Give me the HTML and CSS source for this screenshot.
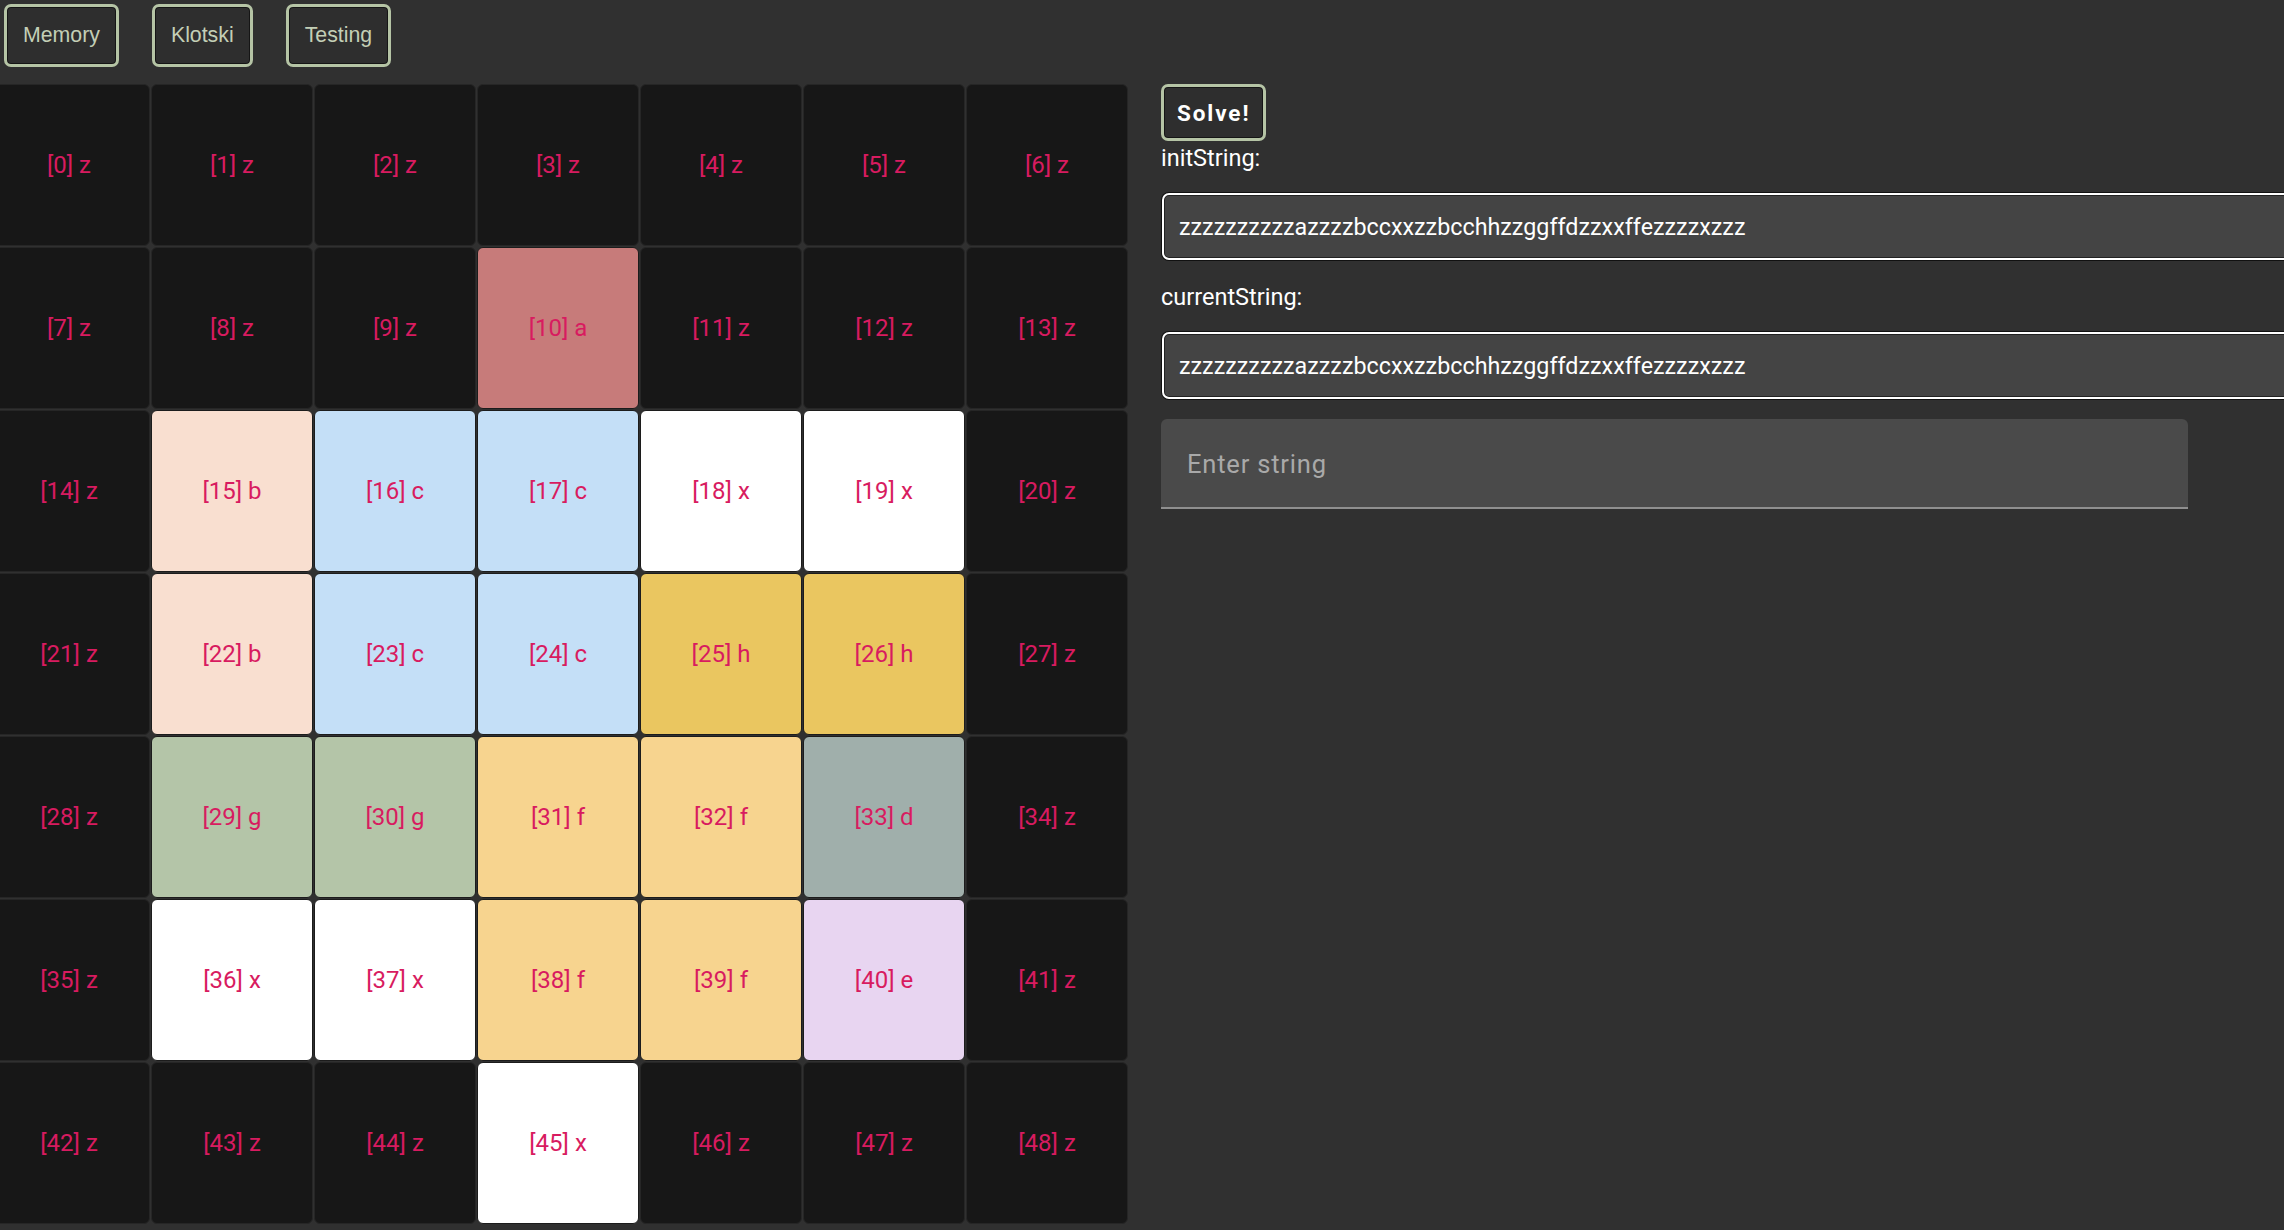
FILE: index.html
```html
<!DOCTYPE html>
<html lang="en">
<head>
<meta charset="utf-8">
<title>Klotski</title>
<link rel="stylesheet" href="styles.css">
</head>
<body>
<nav class="nav">
  <button class="nav-btn">Memory</button>
  <button class="nav-btn">Klotski</button>
  <button class="nav-btn">Testing</button>
</nav>
<main class="main">
  <div class="board">
    <div class="cell z">[0] z</div><div class="cell z">[1] z</div><div class="cell z">[2] z</div><div class="cell z">[3] z</div><div class="cell z">[4] z</div><div class="cell z">[5] z</div><div class="cell z">[6] z</div>
    <div class="cell z">[7] z</div><div class="cell z">[8] z</div><div class="cell z">[9] z</div><div class="cell a">[10] a</div><div class="cell z">[11] z</div><div class="cell z">[12] z</div><div class="cell z">[13] z</div>
    <div class="cell z">[14] z</div><div class="cell b">[15] b</div><div class="cell c">[16] c</div><div class="cell c">[17] c</div><div class="cell x">[18] x</div><div class="cell x">[19] x</div><div class="cell z">[20] z</div>
    <div class="cell z">[21] z</div><div class="cell b">[22] b</div><div class="cell c">[23] c</div><div class="cell c">[24] c</div><div class="cell h">[25] h</div><div class="cell h">[26] h</div><div class="cell z">[27] z</div>
    <div class="cell z">[28] z</div><div class="cell g">[29] g</div><div class="cell g">[30] g</div><div class="cell f">[31] f</div><div class="cell f">[32] f</div><div class="cell d">[33] d</div><div class="cell z">[34] z</div>
    <div class="cell z">[35] z</div><div class="cell x">[36] x</div><div class="cell x">[37] x</div><div class="cell f">[38] f</div><div class="cell f">[39] f</div><div class="cell e">[40] e</div><div class="cell z">[41] z</div>
    <div class="cell z">[42] z</div><div class="cell z">[43] z</div><div class="cell z">[44] z</div><div class="cell x">[45] x</div><div class="cell z">[46] z</div><div class="cell z">[47] z</div><div class="cell z">[48] z</div>
  </div>
  <section class="panel">
    <button class="solve-btn">Solve!</button>
    <div class="label label-init">initString:</div>
    <div class="str-box">zzzzzzzzzzazzzzbccxxzzbcchhzzggffdzzxxffezzzzxzzz</div>
    <div class="label label-current">currentString:</div>
    <div class="str-box">zzzzzzzzzzazzzzbccxxzzbcchhzzggffdzzxxffezzzzxzzz</div>
    <div class="field">
      <input class="field-input" type="text" placeholder="Enter string">
    </div>
  </section>
</main>
</body>
</html>
```

FILE: styles.css
```css
html, body {
  margin: 0;
  padding: 0;
  background: #303030;
  overflow: hidden;
  width: 2284px;
  height: 1230px;
}

body {
  font-family: Roboto, "Noto Sans", sans-serif;
  color: #ffffff;
}

.nav {
  display: flex;
  gap: 33px;
  padding: 4px 4px 0 4px;
  height: 63px;
}

.nav-btn {
  box-sizing: border-box;
  height: 63px;
  padding: 0 16px;
  background: #2e2e2e;
  border: 3px solid #b5c4a5;
  border-radius: 7px;
  box-shadow: inset 0 0 0 1px #151515;
  color: #c3cfb6;
  font-family: "Liberation Sans", Arial, sans-serif;
  font-size: 21.3px;
  line-height: 1;
  cursor: pointer;
}

.main {
  display: flex;
  align-items: flex-start;
  margin-top: 17px;
  overflow: hidden;
  height: 1146px;
}

.board {
  flex: none;
  display: grid;
  grid-template-columns: repeat(7, 162px);
  grid-auto-rows: 162px;
  gap: 1px;
  margin-left: -12px;
}

.cell {
  box-sizing: border-box;
  display: flex;
  align-items: center;
  justify-content: center;
  border: 1px solid #1c1c1c;
  border-radius: 6px;
  font-size: 24px;
  color: #d81b60;
}

.z { background: #171717; border-color: #262626; }
.a { background: #c77b7a; }
.b { background: #f9dfd0; }
.c { background: #c4dff7; }
.x { background: #ffffff; }
.h { background: #eac660; }
.g { background: #b4c5a8; }
.f { background: #f7d48f; }
.d { background: #a0afab; }
.e { background: #e8d5f1; }

.panel {
  flex: 1;
  min-width: 0;
  overflow: hidden;
  display: flex;
  flex-direction: column;
  align-items: flex-start;
  margin-left: 33px;
}

.solve-btn {
  box-sizing: border-box;
  height: 57px;
  padding: 0 13px;
  background: #2e2e2e;
  border: 3px solid #b5c4a5;
  border-radius: 7px;
  box-shadow: inset 0 0 0 1px #151515;
  color: #ffffff;
  font-family: Roboto, sans-serif;
  font-weight: 700;
  font-size: 22.5px;
  letter-spacing: 1.9px;
  cursor: pointer;
}

.label {
  font-size: 23.5px;
  line-height: 26px;
  color: #ffffff;
}

.label-init {
  margin-top: 4px;
}

.label-current {
  margin-top: 24px;
}

.str-box {
  box-sizing: border-box;
  width: calc(100% + 40px);
  flex: none;
  height: 67px;
  margin-top: 22px;
  margin-left: 1px;
  padding: 0 15px;
  display: flex;
  align-items: center;
  background: #444444;
  border: 2px solid #ffffff;
  border-radius: 7px;
  box-shadow: 0 0 0 1px #111111, inset 0 0 0 1px #222222;
  font-size: 23.3px;
  color: #ffffff;
  white-space: nowrap;
}

.field {
  box-sizing: border-box;
  width: 1027px;
  height: 90px;
  margin-top: 20px;
  background: #4a4a4a;
  border-radius: 6px 6px 0 0;
  border-bottom: 2px solid #8f8f8f;
  display: flex;
  align-items: center;
}

.field-input {
  width: 100%;
  height: 100%;
  box-sizing: border-box;
  padding: 2px 26px 0 26px;
  background: transparent;
  border: none;
  outline: none;
  color: #ffffff;
  font-family: Roboto, sans-serif;
  font-size: 25.5px;
  letter-spacing: 0.8px;
}

.field-input::placeholder {
  color: #a9a9a9;
  opacity: 1;
}
```
